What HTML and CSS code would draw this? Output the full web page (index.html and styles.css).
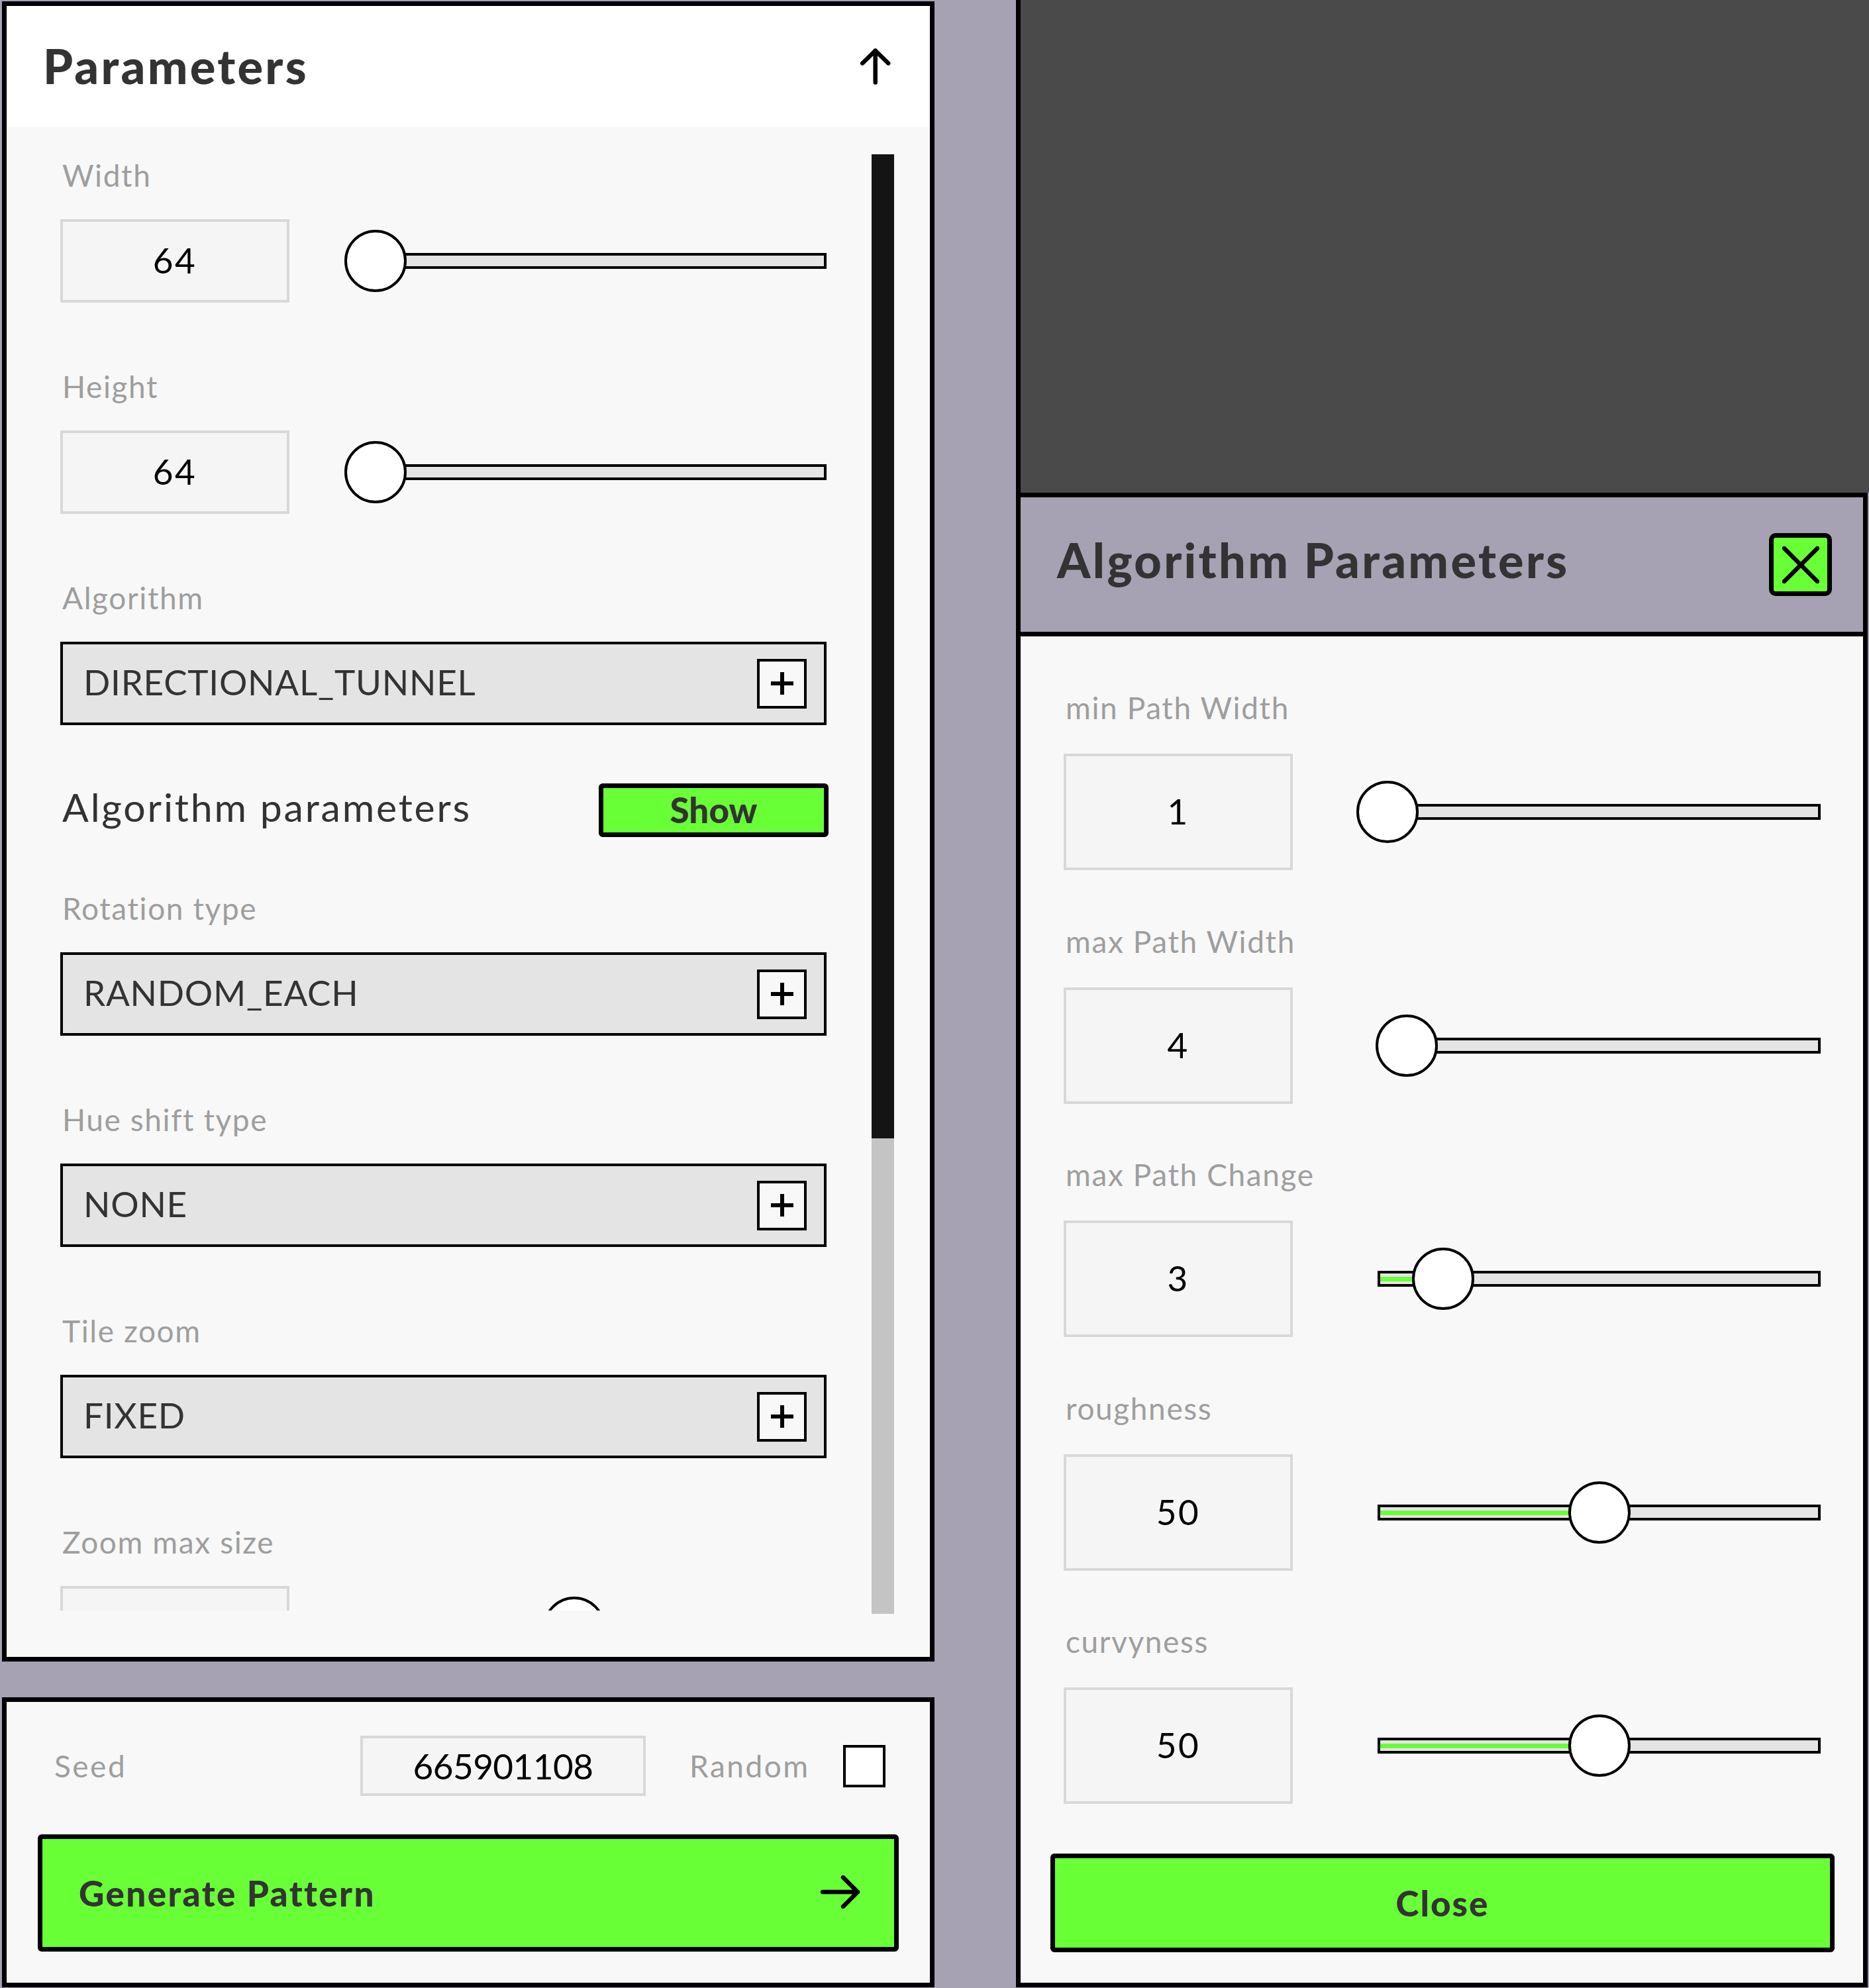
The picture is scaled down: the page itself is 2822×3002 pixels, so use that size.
FILE: index.html
```html
<!DOCTYPE html>
<html lang="en">
<head>
<meta charset="utf-8">
<title>Parameters</title>
<link rel="stylesheet" href="styles.css">
</head>
<body>
<div class="app">
  <div class="left-col">
    <section class="panel params">
      <header class="params-head">
        <h1 class="title">Parameters</h1>
        <svg class="head-arrow" viewBox="0 0 60 60"><path d="M29.700 53.500V5.500M10.200 24.500L29.700 5.500L49.200 24.500" /></svg>
      </header>
      <div class="params-body">
        <div class="scroll">
          <div class="field">
            <div class="label">Width</div>
            <div class="control">
              <div class="num">64</div>
              <div class="slider"><div class="track"></div><div class="knob" style="left:-32px"></div></div>
            </div>
          </div>
          <div class="field">
            <div class="label">Height</div>
            <div class="control">
              <div class="num">64</div>
              <div class="slider"><div class="track"></div><div class="knob" style="left:-32px"></div></div>
            </div>
          </div>
          <div class="field">
            <div class="label">Algorithm</div>
            <div class="select"><span class="sel-text">DIRECTIONAL_TUNNEL</span><span class="plus"><svg viewBox="0 0 34 34"><path d="M17 0V34M0 17H34"/></svg></span></div>
          </div>
          <div class="algo-row">
            <div class="algo-label">Algorithm parameters</div>
            <button class="btn show">Show</button>
          </div>
          <div class="field">
            <div class="label">Rotation type</div>
            <div class="select"><span class="sel-text">RANDOM_EACH</span><span class="plus"><svg viewBox="0 0 34 34"><path d="M17 0V34M0 17H34"/></svg></span></div>
          </div>
          <div class="field">
            <div class="label">Hue shift type</div>
            <div class="select"><span class="sel-text">NONE</span><span class="plus"><svg viewBox="0 0 34 34"><path d="M17 0V34M0 17H34"/></svg></span></div>
          </div>
          <div class="field">
            <div class="label">Tile zoom</div>
            <div class="select"><span class="sel-text">FIXED</span><span class="plus"><svg viewBox="0 0 34 34"><path d="M17 0V34M0 17H34"/></svg></span></div>
          </div>
          <div class="field">
            <div class="label">Zoom max size</div>
            <div class="control">
              <div class="num"></div>
              <div class="slider"><div class="track"></div><div class="knob" style="left:268px"></div></div>
            </div>
          </div>
        </div>
        <div class="scrollbar"><div class="thumb"></div></div>
      </div>
    </section>
    <section class="panel seed">
      <div class="seed-row">
        <div class="seed-label">Seed</div>
        <div class="num seed-num">665901108</div>
        <div class="seed-label random">Random</div>
        <div class="check"></div>
      </div>
      <button class="btn generate">
        <span>Generate Pattern</span>
        <svg class="gen-arrow" viewBox="0 0 60 50"><path d="M3 25H56M34 3L56 25L34 47"/></svg>
      </button>
    </section>
  </div>
  <div class="right-col">
    <div class="canvas"></div>
    <section class="panel modal">
      <header class="modal-head">
        <h2 class="title">Algorithm Parameters</h2>
        <button class="btn x"><svg viewBox="0 0 56 56"><path d="M3 3L53 53M53 3L3 53"/></svg></button>
      </header>
      <div class="modal-body">
        <div class="mfield">
          <div class="label">min Path Width</div>
          <div class="mcontrol">
            <div class="num tall">1</div>
            <div class="slider wide"><div class="track"></div><div class="knob" style="left:-32px"></div></div>
          </div>
        </div>
        <div class="mfield">
          <div class="label">max Path Width</div>
          <div class="mcontrol">
            <div class="num tall">4</div>
            <div class="slider wide"><div class="track"></div><div class="knob" style="left:-3px"></div></div>
          </div>
        </div>
        <div class="mfield">
          <div class="label">max Path Change</div>
          <div class="mcontrol">
            <div class="num tall">3</div>
            <div class="slider wide"><div class="track"><div class="fill" style="width:60px"></div></div><div class="knob" style="left:52px"></div></div>
          </div>
        </div>
        <div class="mfield">
          <div class="label">roughness</div>
          <div class="mcontrol">
            <div class="num tall">50</div>
            <div class="slider wide"><div class="track"><div class="fill" style="width:296px"></div></div><div class="knob" style="left:288px"></div></div>
          </div>
        </div>
        <div class="mfield">
          <div class="label">curvyness</div>
          <div class="mcontrol">
            <div class="num tall">50</div>
            <div class="slider wide"><div class="track"><div class="fill" style="width:296px"></div></div><div class="knob" style="left:288px"></div></div>
          </div>
        </div>
        <button class="btn close">Close</button>
      </div>
    </section>
  </div>
</div>
</body>
</html>
```
FILE: styles.css
```css
* { box-sizing: border-box; }
html, body { margin: 0; padding: 0; }
body {
  background: #a6a2b3;
  font-family: "Lato", "Liberation Sans", sans-serif;
  color: #333;
}
.app { display: flex; width: 2822px; height: 3002px; overflow: hidden; padding-left: 3px; }
.left-col { width: 1408px; padding-top: 2px; display: flex; flex-direction: column; gap: 54px; }
.right-col { width: 1288px; margin-left: 123px; display: flex; flex-direction: column; }
.panel { border: 7px solid #000; background: #f8f8f8; }
.params { height: 2507px; display: flex; flex-direction: column; }
.seed { height: 438px; }
.params-head {
  height: 183px; background: #fff; flex: none;
  display: flex; align-items: center; justify-content: space-between;
  padding: 0 52px 0 55px;
}
.title { margin: 0; font-size: 72px; line-height: 80px; font-weight: 900; color: #333; letter-spacing: 3.300px; }
.params-head .title { margin-top: -4px; }
.modal-head .title { margin-top: -16px; }
.head-arrow { width: 60px; height: 60px; display: block; }
.head-arrow path, .gen-arrow path, .x path, .plus path {
  fill: none; stroke: #000; stroke-width: 6.500px; stroke-linecap: round; stroke-linejoin: round;
}
.params-body { position: relative; flex: 1; }
.scroll { height: 2240px; overflow: hidden; padding: 43px 0 0 81px; }
.scrollbar { position: absolute; left: 1306px; top: 41px; width: 34px; height: 2204px; background: #c4c4c4; }
.thumb { height: 1486px; background: #141414; }
.label { font-size: 46px; line-height: 60px; color: #9e9e9e; margin: 0 0 36px 3px; white-space: nowrap; letter-spacing: 1.600px; }
.field + .field { margin-top: 97px; }
.control { display: flex; align-items: center; height: 126px; }
.num {
  width: 346px; height: 126px; flex: none;
  border: 4px solid #d8d8d8; background: #f5f5f5;
  display: flex; align-items: center; justify-content: center;
  font-size: 53px; font-weight: 400; color: #000; letter-spacing: 2.500px; padding-bottom: 3px;
}
.slider { position: relative; width: 696px; height: 24px; margin-left: 115px; flex: none; }
.slider.wide { width: 669px; margin-left: 128px; }
.track { height: 24px; border: 4px solid #000; background: #e4e4e4; }
.fill { height: 7px; margin-top: 5px; background: #69ff37; }
.knob {
  position: absolute; top: -35px; width: 94px; height: 94px;
  border: 4px solid #000; border-radius: 50%; background: #fff;
}
.select {
  width: 1157px; height: 126px;
  border: 4px solid #000; background: #e4e4e4;
  display: flex; align-items: center; justify-content: space-between;
  padding: 0 26px 0 31px;
  font-size: 53px; color: #333; letter-spacing: 0.750px;
}
.sel-text { margin-top: -6px; }
.plus {
  width: 75px; height: 75px; border: 4px solid #000; background: #f8f8f8;
  display: flex; align-items: center; justify-content: center;
}
.plus svg { width: 34px; height: 34px; display: block; }
.plus path { stroke-linecap: butt; stroke-width: 6px; }
.algo-row {
  width: 1160px; margin-top: 88px; height: 81px;
  display: flex; align-items: center; justify-content: space-between;
}
.algo-row + .field { margin-top: 78px; }
.algo-label { font-size: 59px; color: #333; margin: -10px 0 0 3px; letter-spacing: 2.800px; }
.btn {
  border: 7px solid #000; border-radius: 6px; background: #69ff37; padding: 0;
  font-family: inherit; font-weight: 900; color: #333; font-size: 53px;
}
.show { width: 347px; height: 81px; padding-bottom: 3px; }
.seed-row { display: flex; align-items: center; padding: 51px 67px 0 72px; }
.seed-label { flex: 1; font-size: 46px; color: #9e9e9e; letter-spacing: 2.500px; }
.seed-label.random { flex: none; width: 232px; margin-left: 66px; }
.seed-num { width: 431px; height: 91px; letter-spacing: -0.500px; padding-bottom: 0; }
.check { width: 64px; height: 64px; border: 4px solid #000; background: #fff; }
.generate {
  display: flex; align-items: center; justify-content: space-between;
  width: 1300px; height: 177px; margin: 58px 0 0 47px; padding: 0 51px 0 55px;
  letter-spacing: 2.400px;
}
.gen-arrow { width: 60px; height: 50px; display: block; margin-top: -3px; }
.canvas { height: 744px; flex: none; background: #4a4a4a; border-left: 7px solid #000; }
.modal { width: 1286px; height: 2257px; }
.modal-head {
  height: 210px; background: #a6a2b3; border-bottom: 7px solid #000;
  display: flex; align-items: center; justify-content: space-between;
  padding: 0 47px 0 55px;
}
.x { width: 95px; height: 95px; border-radius: 10px; display: flex; align-items: center; justify-content: center; }
.x svg { width: 56px; height: 56px; display: block; }
.modal-body { padding: 78px 0 0 65px; }
.mfield { margin-bottom: 77.500px; }
.mfield:last-of-type { margin-bottom: 0; }
.mcontrol { display: flex; align-items: center; height: 176px; }
.tall { height: 176px; }
.mfield .label { margin-bottom: 39px; }
.close { display: block; width: 1184px; height: 149px; margin: 75px 0 0 -20px; letter-spacing: 2px; }
```
